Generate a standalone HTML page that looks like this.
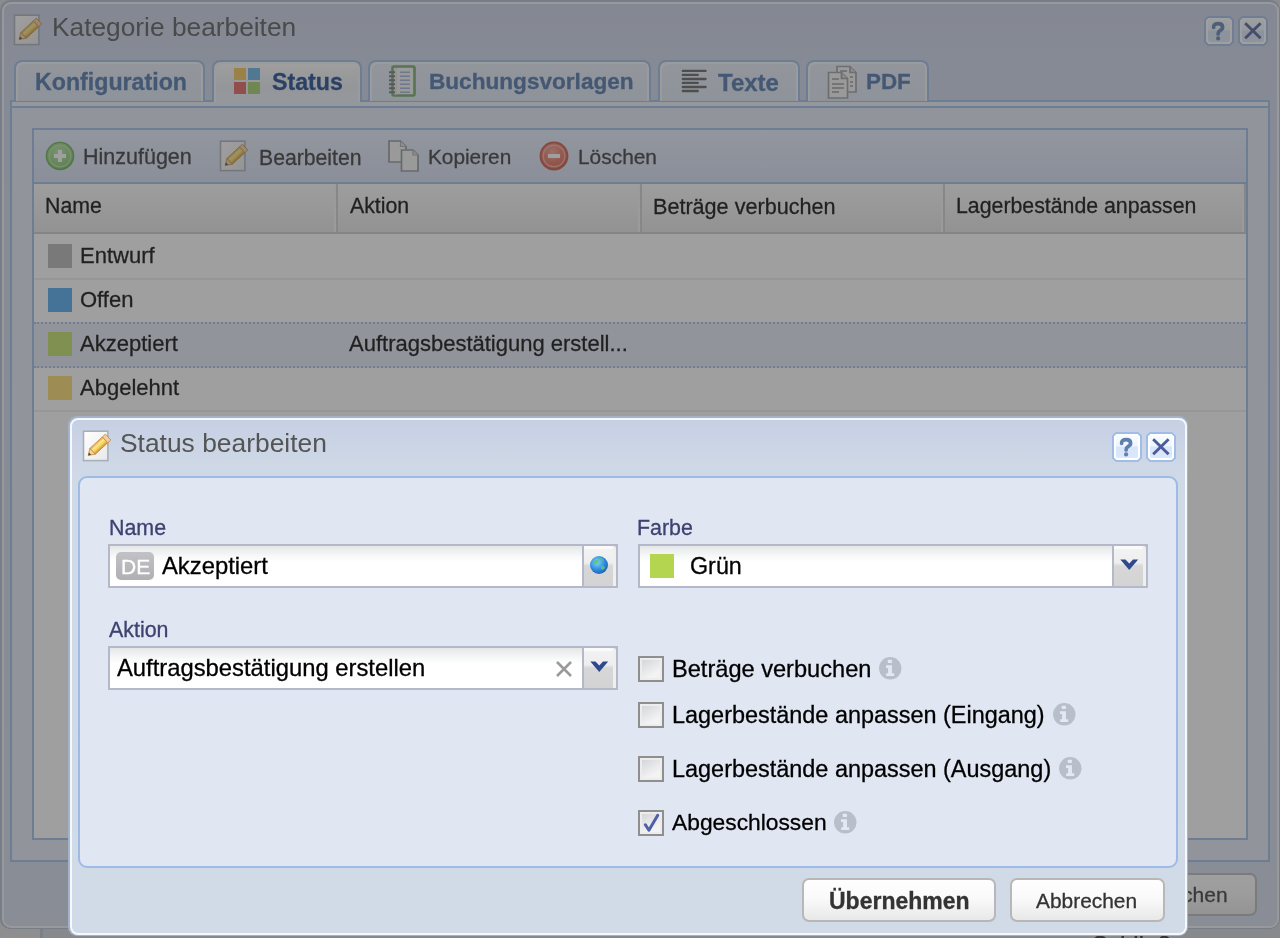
<!DOCTYPE html>
<html><head><meta charset="utf-8">
<style>
*{box-sizing:border-box;margin:0;padding:0}
html,body{width:1280px;height:938px;overflow:hidden;background:#d9d9d9;font-family:"Liberation Sans",sans-serif}
.a{position:absolute}
.t,.tabt,.hdr,.row,.tb,.lbl,.val,.cbt{will-change:transform;-webkit-text-stroke:0.3px currentColor}
.ttl{position:absolute;white-space:nowrap;line-height:1;will-change:transform}
.t{position:absolute;white-space:nowrap;line-height:1}
.tab{position:absolute;top:60px;height:41px;border:2px solid #99bbe8;border-bottom:none;border-radius:8px 8px 0 0;background:linear-gradient(#e6edf8,#dde6f4);box-shadow:inset 2px 2px 0 #f3f6fb,inset -2px 0 0 #f3f6fb}
.tabt{position:absolute;top:70.7px;white-space:nowrap;line-height:1;font-weight:bold;color:#4870a8;font-size:22.8px}
.hdr{position:absolute;top:196.1px;white-space:nowrap;line-height:1;font-size:21.3px;color:#000}
.row{position:absolute;white-space:nowrap;line-height:1;font-size:22px;color:#000}
.tb{position:absolute;top:146.6px;white-space:nowrap;line-height:1;font-size:21.2px;color:#333}
.fld{position:absolute;height:44px;border:2px solid #b5b8c8;background:linear-gradient(#e4e7e8,#f7f8f8 10px,#fff 16px)}
.trg{position:absolute;width:36px;height:44px;border:2px solid #b5b8c8;border-radius:0 4px 0 0;background:linear-gradient(#f3f3f3,#eeeeee 42%,#d7d7d7 50%,#d3d3d3);box-shadow:inset -3px 0 0 #efefef,inset 0 3px 0 #fafafa}
.lbl{position:absolute;white-space:nowrap;line-height:1;font-size:21.4px;color:#3e4270}
.val{position:absolute;white-space:nowrap;line-height:1;font-size:23.8px;color:#000}
.cb{position:absolute;left:570px;width:26px;height:26px;border:2px solid #8f8f8f;box-shadow:inset 0 0 0 2px #ededed;background:linear-gradient(150deg,#cfd2d6,#f3f3f3 70%)}
.cbt{position:absolute;left:604px;white-space:nowrap;line-height:1;font-size:23.2px;color:#000}
.info{position:absolute;width:23px;height:23px}
.btn{position:absolute;top:462px;height:44px;border:2px solid #b7b7b7;border-radius:7px;background:linear-gradient(#fefefe,#fafafa 45%,#e8e8e8)}
</style></head><body>
<svg width="0" height="0" style="position:absolute">
 <defs>

  <linearGradient id="tbg" x1="0" y1="0" x2="0" y2="1"><stop offset="0" stop-color="#fafdff"/><stop offset=".46" stop-color="#eef6fe"/><stop offset=".5" stop-color="#d8e6fa"/><stop offset="1" stop-color="#dde9fb"/></linearGradient>
  <g id="toolbtn">
    <path d="M4.2 1H25.8L29 4.2V25.8L25.8 29H4.2L1 25.8V4.2Z" fill="url(#tbg)" stroke="#9fbde8" stroke-width="2"/>
    <path d="M5 3H25L27 5V25L25 27H5L3 25V5Z" fill="none" stroke="#ffffff" stroke-width="2"/>
  </g>
  <g id="qmark">
    <path d="M9.6 11.4 C9.4 8.7 11.3 7.7 14.1 7.7 C16.9 7.7 18.6 9.2 18.6 11.3 C18.6 13.4 16.9 14.1 15.5 15 C14.4 15.7 14.1 16.4 14.1 18" fill="none" stroke="#5f7fb0" stroke-width="3.7" stroke-linecap="round"/>
    <circle cx="14.1" cy="22.4" r="2.1" fill="#5f7fb0"/>
  </g>
  <g id="xmark"><path d="M7.2 7.2L22.6 22.2M22.6 7.2L7.2 22.2" stroke="#4a5a9a" stroke-width="2.9"/></g>
  <linearGradient id="pg" x1="0" y1="0" x2="1" y2="1"><stop offset="0" stop-color="#ffffff"/><stop offset="1" stop-color="#e9e9e9"/></linearGradient>
  <linearGradient id="pen" x1="0" y1="0" x2="1" y2="1"><stop offset="0" stop-color="#fff3a8"/><stop offset=".5" stop-color="#f1d556"/><stop offset="1" stop-color="#d49b3c"/></linearGradient>
  <radialGradient id="grn" cx=".45" cy=".35" r=".7"><stop offset="0" stop-color="#b4e6a0"/><stop offset=".7" stop-color="#86c872"/><stop offset="1" stop-color="#62ab50"/></radialGradient>
  <radialGradient id="red" cx=".45" cy=".35" r=".7"><stop offset="0" stop-color="#f6a090"/><stop offset=".7" stop-color="#e06350"/><stop offset="1" stop-color="#c24a3a"/></radialGradient>
  <radialGradient id="glb" cx=".4" cy=".35" r=".7"><stop offset="0" stop-color="#7fd8f5"/><stop offset=".6" stop-color="#2f8be0"/><stop offset="1" stop-color="#1b5fb0"/></radialGradient>
  <linearGradient id="penb" gradientUnits="userSpaceOnUse" x1="7.9" y1="18.4" x2="13.3" y2="24.2"><stop offset="0" stop-color="#e2a544"/><stop offset=".35" stop-color="#fbe98c"/><stop offset=".65" stop-color="#f3d35a"/><stop offset="1" stop-color="#cf8f34"/></linearGradient>
  <g id="pencil">
    <rect x="1.5" y="1.2" width="24.4" height="29.4" fill="url(#pg)" stroke="#a9afb9" stroke-width="1.6"/>
    <path d="M7.9 18.4 L20.4 6.9 L25.8 12.7 L13.3 24.2 Z" fill="url(#penb)" stroke="#c98a3c" stroke-width=".9" stroke-linejoin="round"/>
    <path d="M20.4 6.9 L23.4 4.2 L28.8 10 L25.8 12.7 Z" fill="#f4cfa6" stroke="#c98a3c" stroke-width=".9" stroke-linejoin="round"/>
    <path d="M7.9 18.4 L13.3 24.2 L6.2 25.4 Z" fill="#f1d3a6" stroke="#bf8440" stroke-width=".8" stroke-linejoin="round"/>
    <path d="M6.2 25.4 L7.02 22.6 L9.06 24.8 Z" fill="#5a3a18"/>
  </g>
  <g id="infoi">
    <circle cx="11.25" cy="11.35" r="11.25" fill="#b9bfca"/>
    <rect x="8.8" y="2.7" width="4.15" height="3.2" rx=".6" fill="#e2e9f5"/>
    <path d="M7 8.15 H12.95 V16.15 H15.2 V19 H7.2 V16.15 H9.1 V11 H7 Z" fill="#e2e9f5"/>
  </g>
  <g id="chev"><path d="M0.3 0.6 H5.5 L9.25 4.5 L13 0.6 H18.2 L9.25 10.9 Z" fill="#2f4a8c"/></g>
 </defs>
</svg>

<!-- ================= BACKGROUND (masked) ================= -->
<div class="a" id="bg" style="left:0;top:0;width:1280px;height:938px">
  <!-- stuff below outer window -->
  <div class="a" style="left:0;top:900px;width:1280px;height:38px;background:#dcdcdc"></div>
  <div class="a" style="left:43px;top:900px;width:1237px;height:38px;background:#cfd2d8"></div>
  <div class="a" style="left:40px;top:900px;width:3px;height:38px;background:#b4c0d0"></div>
  <div class="t" style="left:1092px;top:932.5px;font-size:24px;color:#222">Schließen</div>

  <!-- outer window -->
  <div class="a" style="left:0;top:0;width:1280px;height:929px;border-radius:10px;background:#aebcd0"></div>
  <div class="a" style="left:1.5px;top:1.5px;width:1277px;height:926px;border-radius:9px;border:2px solid #eef2f8;background:linear-gradient(#c9d0e5,#cdd5e9 60px,#d2dbec)"></div>

  <!-- title -->
  <svg class="a" style="left:13px;top:14px" width="34" height="33" viewBox="0 0 34 33"><use href="#pencil"/></svg>
  <div class="ttl" style="left:51.8px;top:13.6px;font-size:26.3px;color:#555">Kategorie bearbeiten</div>
  <!-- help / close -->
  <svg class="a" style="left:1204px;top:16px" width="30" height="30" viewBox="0 0 30 30"><use href="#toolbtn"/><use href="#qmark"/></svg>
  <svg class="a" style="left:1238px;top:16px" width="30" height="30" viewBox="0 0 30 30"><use href="#toolbtn"/><use href="#xmark"/></svg>

  <!-- tab panel body -->
  <div class="a" style="left:10px;top:100px;width:1260px;height:762px;border:2px solid #99bbe8;background:#e2eaf7"></div>
  <div class="a" style="left:12px;top:102px;width:1256px;height:4px;background:#e9eff9"></div>
  <div class="a" style="left:12px;top:106px;width:1256px;height:2px;background:#99bbe8"></div>

  <!-- tabs -->
  <div class="tab" style="left:14px;width:191px"></div>
  <div class="tabt" style="left:35px;font-size:23.2px">Konfiguration</div>

  <div class="tab" style="left:212px;width:150px;height:42px;background:linear-gradient(#ffffff,#f5f6f8 25%,#e9edf3 60%,#e9eff9)"></div>
  <div class="a" style="left:234px;top:68px;width:12px;height:12px;background:#f2c24e"></div>
  <div class="a" style="left:248px;top:68px;width:12px;height:12px;background:#62aee6"></div>
  <div class="a" style="left:234px;top:82px;width:12px;height:12px;background:#e25d58"></div>
  <div class="a" style="left:248px;top:82px;width:12px;height:12px;background:#a3cf63"></div>
  <div class="tabt" style="left:272px;color:#15428b;font-size:23.2px">Status</div>

  <div class="tab" style="left:368px;width:283px"></div>
  <svg class="a" style="left:388px;top:65px" width="30" height="33" viewBox="0 0 30 33">
    <rect x="4.5" y="1.5" width="22" height="29" rx="1.5" fill="#f3f5f2" stroke="#6fa865" stroke-width="2.6"/>
    <g stroke="#9bb0d8" stroke-width="1.6"><path d="M12 7.2H22M12 11.2H22M12 15.2H22M12 19.2H22M12 23.2H22M12 27.2H22"/></g>
    <g stroke="#6f737a" stroke-width="2"><path d="M1 7.2H7M1 11.2H7M1 15.2H7M1 19.2H7M1 23.2H7M1 27.2H7"/></g>
    <path d="M8 3V30" stroke="#e1e4e0" stroke-width="1.5"/>
  </svg>
  <div class="tabt" style="left:429px;font-size:22.6px">Buchungsvorlagen</div>

  <div class="tab" style="left:658px;width:142px"></div>
  <svg class="a" style="left:681px;top:68px" width="26" height="26" viewBox="0 0 26 26">
    <g stroke="#5c5c5c" stroke-width="2.3" stroke-linecap="round"><path d="M1.8 2.9H24.6M1.8 6.9H16.8M1.8 11H24.6M1.8 14.9H16.8M1.8 19H24.6M1.8 23H16.8"/></g>
  </svg>
  <div class="tabt" style="left:718px;font-size:24px">Texte</div>

  <div class="tab" style="left:806px;width:123px"></div>
  <svg class="a" style="left:826px;top:64px" width="34" height="36" viewBox="0 0 34 36">
    <path d="M11 2.5H24L30 8.5V28H11Z" fill="#f4f4f4" stroke="#989ca1" stroke-width="1.7"/>
    <path d="M24 2.5V8.5H30" fill="#d8d8d8" stroke="#989ca1" stroke-width="1.7"/>
    <path d="M2.5 8.5H15.5L21.5 14.5V34H2.5Z" fill="#f4f4f4" stroke="#989ca1" stroke-width="1.7"/>
    <path d="M15.5 8.5V14.5H21.5" fill="#d8d8d8" stroke="#989ca1" stroke-width="1.7"/>
    <g stroke="#8e9296" stroke-width="1.6"><path d="M6 15H13M6 20H18M6 24H18M6 28H13M14 7H21M24 13H27M24 18H27M24 22H27"/></g>
  </svg>
  <div class="tabt" style="left:866px;font-size:22.4px">PDF</div>

  <!-- grid panel -->
  <div class="a" style="left:32px;top:128px;width:1216px;height:712px;border:2px solid #99bbe8;background:#fff"></div>
  <div class="a" style="left:34px;top:130px;width:1212px;height:54px;background:linear-gradient(#e4ecfc,#d6def3);border-bottom:2px solid #99bbe8"></div>
  <svg class="a" style="left:45px;top:141px" width="30" height="30" viewBox="0 0 30 30">
    <circle cx="15" cy="15" r="13.6" fill="url(#grn)" stroke="#66ad52" stroke-width="1.4"/>
    <circle cx="15" cy="15" r="10.8" fill="none" stroke="#b8e6a6" stroke-width="1.4" opacity=".8"/>
    <path d="M13 9H17V13H21V17H17V21H13V17H9V13H13Z" fill="#ffffff"/>
  </svg>
  <div class="tb" style="left:83.2px;font-size:21.5px">Hinzufügen</div>
  <svg class="a" style="left:219px;top:140px" width="34" height="33" viewBox="0 0 34 33"><use href="#pencil"/></svg>
  <div class="tb" style="left:258.5px">Bearbeiten</div>
  <svg class="a" style="left:387px;top:139px" width="33" height="34" viewBox="0 0 33 34">
    <path d="M2 2H13.5L19 7.5V23H2Z" fill="#f5f5f5" stroke="#8e9296" stroke-width="1.7"/>
    <path d="M13.5 2V7.5H19" fill="#dcdcdc" stroke="#a4a8ac" stroke-width="1.2"/>
    <path d="M14.5 11H26L31 16V32H14.5Z" fill="#f5f5f5" stroke="#8e9296" stroke-width="1.7"/>
    <path d="M26 11V16H31" fill="#dcdcdc" stroke="#a4a8ac" stroke-width="1.2"/>
  </svg>
  <div class="tb" style="left:428px;font-size:20.8px">Kopieren</div>
  <svg class="a" style="left:539px;top:141px" width="30" height="30" viewBox="0 0 30 30">
    <circle cx="15" cy="15" r="13.6" fill="url(#red)" stroke="#c9503f" stroke-width="1.6"/>
    <circle cx="15" cy="15" r="10.8" fill="none" stroke="#f7b9ad" stroke-width="1.4" opacity=".8"/>
    <rect x="9" y="13" width="12" height="4" fill="#fff"/>
  </svg>
  <div class="tb" style="left:578px;font-size:20.9px">Löschen</div>

  <!-- header -->
  <div class="a" style="left:34px;top:184px;width:1212px;height:50px;background:linear-gradient(#fbfbfb,#f3f3f4 40%,#e4e5e7);border-bottom:2px solid #c8c8c8"></div>
  <div class="a" style="left:336px;top:184px;width:2px;height:48px;background:#cfcfcf;box-shadow:-2px 0 0 #f6f6f6"></div>
  <div class="a" style="left:640px;top:184px;width:2px;height:48px;background:#cfcfcf;box-shadow:-2px 0 0 #f6f6f6"></div>
  <div class="a" style="left:943px;top:184px;width:2px;height:48px;background:#cfcfcf;box-shadow:-2px 0 0 #f6f6f6"></div>
  <div class="a" style="left:1244px;top:184px;width:2px;height:48px;background:#cfcfcf;box-shadow:-2px 0 0 #f6f6f6"></div>
  <div class="hdr" style="left:45px">Name</div>
  <div class="hdr" style="left:350px">Aktion</div>
  <div class="hdr" style="left:653.2px;font-size:21.6px;top:195.9px">Beträge verbuchen</div>
  <div class="hdr" style="left:955.5px">Lagerbestände anpassen</div>

  <!-- rows -->
  <div class="a" style="left:34px;top:278px;width:1212px;height:2px;background:#ededed"></div>
  <div class="a" style="left:34px;top:322px;width:1212px;height:46px;background:#e3eaf6;border-top:2px dotted #a9bde6;border-bottom:2px dotted #a9bde6"></div>
  <div class="a" style="left:34px;top:410px;width:1212px;height:2px;background:#ededed"></div>
  <div class="a" style="left:48px;top:244px;width:24px;height:24px;background:#b2b2b2"></div>
  <div class="a" style="left:48px;top:288px;width:24px;height:24px;background:#4aa4ee"></div>
  <div class="a" style="left:48px;top:332px;width:24px;height:24px;background:#c0e062"></div>
  <div class="a" style="left:48px;top:376px;width:24px;height:24px;background:#fcd86a"></div>
  <div class="row" style="left:79.8px;top:245.4px">Entwurf</div>
  <div class="row" style="left:79.8px;top:289.4px">Offen</div>
  <div class="row" style="left:79.8px;top:333.4px">Akzeptiert</div>
  <div class="row" style="left:349.2px;top:333.4px">Auftragsbestätigung erstell...</div>
  <div class="row" style="left:79.8px;top:377.4px">Abgelehnt</div>

  <!-- outer bottom button -->
  <div class="a" style="left:1100px;top:873px;width:157px;height:43px;border:2px solid #b7b7b7;border-radius:7px;background:linear-gradient(#fefefe,#fafafa 45%,#e8e8e8)"></div>
  <div class="t" style="left:1126px;top:884px;font-size:21px;color:#333">Abbrechen</div>
</div>
<!-- mask -->
<div class="a" style="left:0;top:0;width:1280px;height:938px;background:rgba(64,64,64,.5)"></div>

<!-- ================= MODAL ================= -->
<div class="a" id="modal" style="left:68px;top:416px;width:1120px;height:520px">
  <div class="a" style="left:0;top:0;width:1120px;height:520px;border-radius:9px;background:#a3b3cb"></div>
  <div class="a" style="left:1.5px;top:1.5px;width:1117px;height:517px;border-radius:8px;border:2px solid #f5f8fc;background:linear-gradient(#c6d0e3,#cdd7e6 40px,#d0dae6 62px,#d1dbe7)"></div>

  <svg class="a" style="left:14px;top:14px" width="34" height="33" viewBox="0 0 34 33"><use href="#pencil"/></svg>
  <div class="ttl" style="left:51.6px;top:13.7px;font-size:26.4px;color:#555">Status bearbeiten</div>

  <svg class="a" style="left:1044px;top:16px" width="30" height="30" viewBox="0 0 30 30"><use href="#toolbtn"/><use href="#qmark"/></svg>
  <svg class="a" style="left:1078px;top:16px" width="30" height="30" viewBox="0 0 30 30"><use href="#toolbtn"/><use href="#xmark"/></svg>

  <!-- body -->
  <div class="a" style="left:10px;top:60px;width:1100px;height:392px;border:2px solid #9dbbe6;border-radius:9px;background:#e0e7f3"></div>

  <!-- Name -->
  <div class="lbl" style="left:40.5px;top:102.1px">Name</div>
  <div class="fld" style="left:40px;top:128px;width:510px"></div>
  <div class="a" style="left:48px;top:136px;width:38px;height:28px;border-radius:5px;background:linear-gradient(#c2c2c6,#b9b9bd 50%,#b0b0b4)"></div>
  <div class="t" style="left:52.5px;top:140px;font-size:21px;color:#fff">DE</div>
  <div class="val" style="left:94px;top:137.9px">Akzeptiert</div>
  <div class="trg" style="left:514px;top:128px"></div>
  <svg class="a" style="left:521px;top:139px" width="20" height="20" viewBox="0 0 20 20">
    <circle cx="10" cy="10" r="9" fill="url(#glb)"/>
    <path d="M5 6 Q8 4 10 6 Q9 9 6 9 Q4 8 5 6Z M12 11 Q15 10 16 13 Q14 16 12 14Z M11 3 Q14 3 15 6 Q13 6 11 4Z" fill="#5fc46a" opacity=".85"/>
  </svg>

  <!-- Farbe -->
  <div class="lbl" style="left:569px;top:102.1px">Farbe</div>
  <div class="fld" style="left:570px;top:128px;width:510px"></div>
  <div class="a" style="left:582px;top:138px;width:24px;height:24px;background:#b3d54f"></div>
  <div class="val" style="left:622px;top:138.7px;font-size:23.3px">Grün</div>
  <div class="trg" style="left:1044px;top:128px"></div>
  <svg class="a" style="left:1051.5px;top:143px" width="19" height="12" viewBox="0 0 19 12"><use href="#chev"/></svg>

  <!-- Aktion -->
  <div class="lbl" style="left:40.5px;top:203.8px">Aktion</div>
  <div class="fld" style="left:40px;top:230px;width:510px"></div>
  <div class="val" style="left:48.5px;top:240.3px">Auftragsbestätigung erstellen</div>
  <svg class="a" style="left:487px;top:243.5px" width="18" height="18" viewBox="0 0 18 18"><path d="M2 2L16 16M16 2L2 16" stroke="#9a9a9a" stroke-width="2.6"/></svg>
  <div class="trg" style="left:514px;top:230px"></div>
  <svg class="a" style="left:521.5px;top:245px" width="19" height="12" viewBox="0 0 19 12"><use href="#chev"/></svg>

  <!-- checkboxes -->
  <div class="cb" style="top:240px"></div>
  <div class="cbt" style="top:241.8px;font-size:23.6px">Beträge verbuchen</div>
  <svg class="info" style="left:811px;top:241px" viewBox="0 0 23 23"><use href="#infoi"/></svg>

  <div class="cb" style="top:286px"></div>
  <div class="cbt" style="top:287.9px;font-size:23.45px">Lagerbestände anpassen (Eingang)</div>
  <svg class="info" style="left:984.6px;top:287.2px" viewBox="0 0 23 23"><use href="#infoi"/></svg>

  <div class="cb" style="top:340px"></div>
  <div class="cbt" style="top:341.9px;font-size:23.45px">Lagerbestände anpassen (Ausgang)</div>
  <svg class="info" style="left:990.6px;top:341.2px" viewBox="0 0 23 23"><use href="#infoi"/></svg>

  <div class="cb" style="top:394px"></div>
  <svg class="a" style="left:574px;top:396px" width="20" height="20" viewBox="0 0 20 20"><path d="M3.4 12.8 L6.9 18.2 L15.6 3.4" stroke="#4f5fa8" stroke-width="3" fill="none" stroke-linecap="round" stroke-linejoin="round"/></svg>
  <div class="cbt" style="top:395.2px;font-size:22.8px">Abgeschlossen</div>
  <svg class="info" style="left:766px;top:395px" viewBox="0 0 23 23"><use href="#infoi"/></svg>

  <!-- buttons -->
  <div class="btn" style="left:734px;width:194px"></div>
  <div class="t" style="left:760.5px;top:474.3px;font-size:23px;font-weight:bold;color:#333">Übernehmen</div>
  <div class="btn" style="left:942px;width:155px"></div>
  <div class="t" style="left:968px;top:475px;font-size:20.9px;color:#333">Abbrechen</div>
</div>
</body></html>
